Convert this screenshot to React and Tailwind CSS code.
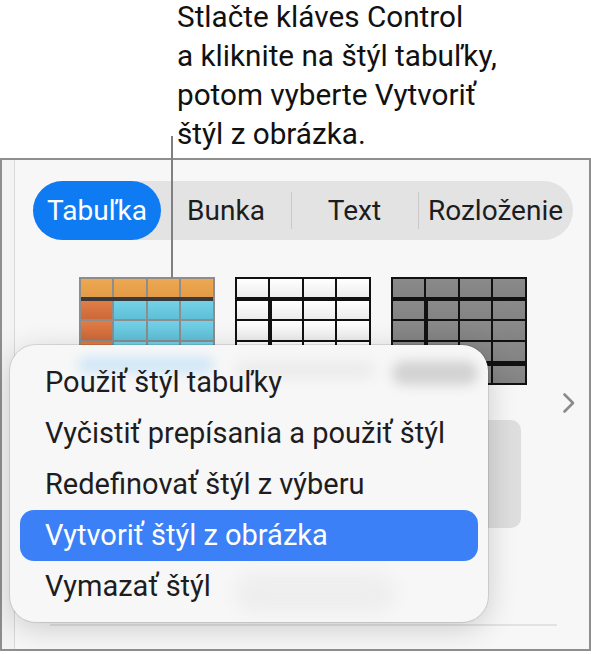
import React from "react";

// One thumbnail in the table-style picker. Separators come from the
// container background showing through the gaps between cells.
const StyleTable = ({ frame, heavy, head, side, body, heavyCol }) => {
  const cell = "bg-linear-to-b";
  const bodyRow = (h) => (
    <div className={`flex gap-x-[2px] ${h}`}>
      <div className={`w-[31px] ${cell} ${side} ${heavyCol ? "mr-[2px]" : ""}`} />
      <div className={`${heavyCol ? "w-[30px]" : "w-[32px]"} ${cell} ${body}`} />
      <div className={`w-[31px] ${cell} ${body}`} />
      <div className={`w-[32px] ${cell} ${body}`} />
    </div>
  );

  return (
    <div className={`w-[136px] h-[108px] p-[2px] flex flex-col ${frame}`}>
      <div className="flex gap-x-[2px] h-[18px]">
        <div className={`w-[31px] ${cell} ${head}`} />
        <div className={`w-[32px] ${cell} ${head}`} />
        <div className={`w-[31px] ${cell} ${head}`} />
        <div className={`w-[32px] ${cell} ${head}`} />
      </div>
      <div className={`h-[4px] ${heavy}`} />
      {bodyRow("h-[18px]")}
      <div className="h-[2px]" />
      {bodyRow("h-[19px]")}
      <div className="h-[2px]" />
      {bodyRow("h-[19px]")}
      <div className={`h-[5px] ${heavy}`} />
      {bodyRow("h-[17px]")}
    </div>
  );
};

const segments = [
  { label: "Tabuľka", w: "w-[128px]", active: true },
  { label: "Bunka", w: "w-[130px]" },
  { label: "Text", w: "w-[127px]" },
  { label: "Rozloženie", w: "w-[155px]" },
];

const menuItems = [
  "Použiť štýl tabuľky",
  "Vyčistiť prepísania a použiť štýl",
  "Redefinovať štýl z výberu",
  "Vytvoriť štýl z obrázka",
  "Vymazať štýl",
];

export default function App() {
  return (
    <div className="relative w-[591px] h-[654px] overflow-hidden bg-white font-['Roboto','Liberation_Sans',sans-serif] text-[#1c1c1e]">
      <div className="h-[161px] pl-[177px]">
        <p className="-mt-[3px] text-[29.7px] leading-[39px] text-[#111]">
          Stlačte kláves Control
          <br />a kliknite na štýl tabuľky,
          <br />
          potom vyberte Vytvoriť
          <br />
          štýl z obrázka.
        </p>
      </div>

      <div className="h-[493px] flex border-2 border-[#8e8e8e] bg-[#f7f7f7]">
        <div className="w-[13px] shrink-0 bg-[#f3f3f3] border-r border-[#d9d9d9]" />

        <div className="flex-1 flex flex-col">
          <div className="mt-[21px] ml-[18px] w-[540px] h-[59px] flex items-center rounded-full bg-[#e3e3e3]">
            {segments.map((s, i) => (
              <div key={s.label} className={`relative h-full ${s.w} flex items-center justify-center`}>
                {i > 1 && (
                  <span className="absolute left-0 top-[11px] h-[37px] w-px bg-[#c9c9c9]" />
                )}
                {s.active ? (
                  <span className="w-full h-full rounded-full bg-[#0f7bf3] text-white flex items-center justify-center text-[28px]">
                    {s.label}
                  </span>
                ) : (
                  <span className="text-[28px] text-[#1d1d1f]">{s.label}</span>
                )}
              </div>
            ))}
          </div>

          <div className="mt-[37px] ml-[64px] flex gap-[20px]">
            <StyleTable
              frame="bg-[#8d8d8d]"
              heavy="bg-[#3a3a3a]"
              head="from-[#eda850] to-[#e39b47]"
              side="from-[#e17d46] to-[#cd6839]"
              body="from-[#74d2e8] to-[#5ebfd7]"
            />
            <StyleTable
              frame="bg-[#111]"
              heavy="bg-[#111]"
              head="from-white to-[#ededed]"
              side="from-white to-[#ececec]"
              body="from-white to-[#ececec]"
              heavyCol
            />
            <StyleTable
              frame="bg-[#111]"
              heavy="bg-[#111]"
              head="from-[#8a8a8a] to-[#838383]"
              side="from-[#8a8a8a] to-[#838383]"
              body="from-[#8a8a8a] to-[#838383]"
              heavyCol
            />
          </div>

          <div className="mt-[7px] ml-[547px] h-[22px]">
            <svg width="14" height="22" viewBox="0 0 14 22" fill="none">
              <path d="M2.5 2.5 L11 11 L2.5 19.5" stroke="#8a8a8a" strokeWidth="2.6" strokeLinecap="round" strokeLinejoin="round" />
            </svg>
          </div>

          <div className="mt-[6px] ml-[315px] w-[191px] h-[108px] rounded-[10px] bg-[#dedede]" />

          <div className="mt-[96px] ml-[35px] w-[507px] h-[2px] bg-[#e2e2e2]" />
        </div>
      </div>

      {/* leader from the caption down to the first table style */}
      <div className="absolute left-[171px] top-[136px] w-[2px] h-[142px] bg-[#808080]" />

      {/* context menu; the soft shapes are the frosted picker seen through it */}
      <div className="absolute left-[10px] top-[345px] w-[478px] h-[277px] px-[10px] pt-[12px] rounded-[26px] overflow-hidden bg-[#f7f7f7] ring-1 ring-black/10 shadow-[0_6px_30px_rgba(0,0,0,0.18)]">
        <div className="absolute left-[68px] top-[12px] w-[136px] h-[16px] rounded-full bg-[#cfe6f7] blur-[6px]" />
        <div className="absolute left-[225px] top-[16px] w-[140px] h-[18px] rounded-full bg-[#ececec] blur-[6px]" />
        <div className="absolute left-[382px] top-[16px] w-[86px] h-[24px] rounded-full bg-[#d2d2d2] blur-[6px]" />
        <div className="absolute left-[225px] top-[228px] w-[160px] h-[40px] rounded-full bg-[#eeeeee] blur-[8px]" />
        <div className="relative">
          {menuItems.map((item) => {
            const active = item === "Vytvoriť štýl z obrázka";
            return (
              <div
                key={item}
                className={`h-[51px] pl-[25px] flex items-center rounded-[14px] text-[29px] ${
                  active ? "bg-[#3b80f6] text-white" : "text-[#1d1d1f]"
                }`}
              >
                {item}
              </div>
            );
          })}
        </div>
      </div>
    </div>
  );
}
